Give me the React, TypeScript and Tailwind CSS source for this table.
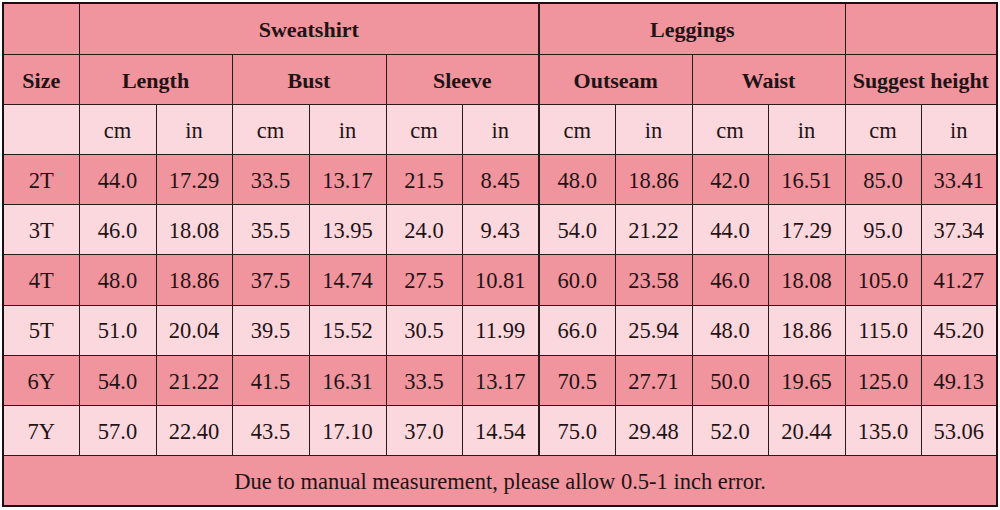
import React from 'react';

const rows: string[][] = [
  ['2T', '44.0', '17.29', '33.5', '13.17', '21.5', '8.45', '48.0', '18.86', '42.0', '16.51', '85.0', '33.41'],
  ['3T', '46.0', '18.08', '35.5', '13.95', '24.0', '9.43', '54.0', '21.22', '44.0', '17.29', '95.0', '37.34'],
  ['4T', '48.0', '18.86', '37.5', '14.74', '27.5', '10.81', '60.0', '23.58', '46.0', '18.08', '105.0', '41.27'],
  ['5T', '51.0', '20.04', '39.5', '15.52', '30.5', '11.99', '66.0', '25.94', '48.0', '18.86', '115.0', '45.20'],
  ['6Y', '54.0', '21.22', '41.5', '16.31', '33.5', '13.17', '70.5', '27.71', '50.0', '19.65', '125.0', '49.13'],
  ['7Y', '57.0', '22.40', '43.5', '17.10', '37.0', '14.54', '75.0', '29.48', '52.0', '20.44', '135.0', '53.06'],
];

// widths follow the grid lines in the chart (13 columns)
const colClasses = [
  'w-[76px]', 'w-[77px]', 'w-[76px]', 'w-[77px]', 'w-[77px]', 'w-[76px]', 'w-[77px]',
  'w-[76px]', 'w-[77px]', 'w-[76px]', 'w-[77px]', 'w-[76px]', 'w-[76px]',
];

const dark = 'bg-[#f0949d]';
const light = 'bg-[#fbd8dd]';
const cell = 'border border-[#2a1a1c] text-center align-middle px-0 pt-[2px] pb-0';

// column index 7 starts the leggings half, which has a heavier divider
const leftEdge = (i: number) => (i === 7 ? 'border-l-2' : '');

export default function App() {
  return (
    <div className="w-[1000px] h-[510px] bg-white pt-[2px] pl-[2px] font-['Liberation_Serif','Times_New_Roman',serif]">
      <table className="table-fixed border-collapse border-2 border-[#1a1011] w-[996px] h-[505px] text-[#1f1316] font-['Liberation_Serif','Times_New_Roman',serif]">
        <colgroup>
          {colClasses.map((c, i) => (
            <col key={i} className={c} />
          ))}
        </colgroup>
        <tbody>
          <tr className={`${dark} h-[51px] text-[22px] font-bold`}>
            <td className={cell}></td>
            <td className={cell} colSpan={6}>Sweatshirt</td>
            <td className={`${cell} border-l-2`} colSpan={4}>Leggings</td>
            <td className={cell} colSpan={2}></td>
          </tr>
          <tr className={`${dark} h-[50px] text-[22px] font-bold`}>
            <td className={cell}>Size</td>
            <td className={cell} colSpan={2}>Length</td>
            <td className={cell} colSpan={2}>Bust</td>
            <td className={cell} colSpan={2}>Sleeve</td>
            <td className={`${cell} border-l-2`} colSpan={2}>Outseam</td>
            <td className={cell} colSpan={2}>Waist</td>
            <td className={`${cell} whitespace-nowrap`} colSpan={2}>Suggest height</td>
          </tr>
          <tr className={`${light} h-[50px] text-[22.5px]`}>
            <td className={cell}></td>
            {Array.from({ length: 12 }).map((_, i) => (
              <td key={i} className={`${cell} ${leftEdge(i + 1)}`}>
                {i % 2 === 0 ? 'cm' : 'in'}
              </td>
            ))}
          </tr>
          {rows.map((row, r) => (
            <tr key={row[0]} className={`${r % 2 === 0 ? dark : light} h-[50px] text-[22.5px]`}>
              {row.map((v, i) => (
                <td key={i} className={`${cell} ${leftEdge(i)}`}>
                  {v}
                </td>
              ))}
            </tr>
          ))}
          <tr className={`${dark} h-[50px] text-[22.5px]`}>
            <td className={cell} colSpan={13}>
              Due to manual measurement, please allow 0.5-1 inch error.
            </td>
          </tr>
        </tbody>
      </table>
    </div>
  );
}
